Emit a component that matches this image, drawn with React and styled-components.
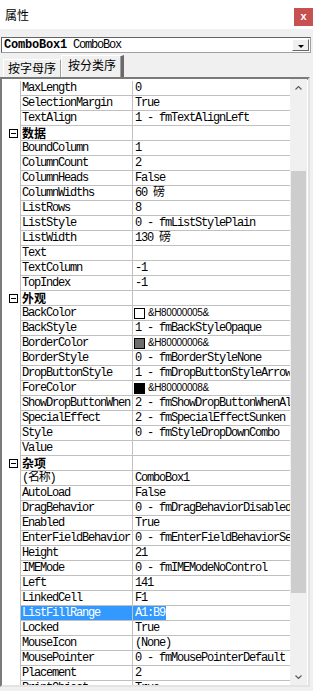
import React from 'react';
import styled, { createGlobalStyle } from 'styled-components';

const rows = [
	{ name: 'MaxLength', value: '0' },
	{ name: 'SelectionMargin', value: 'True' },
	{ name: 'TextAlign', value: '1 - fmTextAlignLeft' },
	{ cat: '数据' },
	{ name: 'BoundColumn', value: '1' },
	{ name: 'ColumnCount', value: '2' },
	{ name: 'ColumnHeads', value: 'False' },
	{ name: 'ColumnWidths', value: '60 磅' },
	{ name: 'ListRows', value: '8' },
	{ name: 'ListStyle', value: '0 - fmListStylePlain' },
	{ name: 'ListWidth', value: '130 磅' },
	{ name: 'Text', value: '' },
	{ name: 'TextColumn', value: '-1' },
	{ name: 'TopIndex', value: '-1' },
	{ cat: '外观' },
	{ name: 'BackColor', value: '&H80000005&', swatch: '#ffffff' },
	{ name: 'BackStyle', value: '1 - fmBackStyleOpaque' },
	{ name: 'BorderColor', value: '&H80000006&', swatch: '#6d6d6d' },
	{ name: 'BorderStyle', value: '0 - fmBorderStyleNone' },
	{ name: 'DropButtonStyle', value: '1 - fmDropButtonStyleArrow' },
	{ name: 'ForeColor', value: '&H80000008&', swatch: '#000000' },
	{ name: 'ShowDropButtonWhen', value: '2 - fmShowDropButtonWhenAlways' },
	{ name: 'SpecialEffect', value: '2 - fmSpecialEffectSunken' },
	{ name: 'Style', value: '0 - fmStyleDropDownCombo' },
	{ name: 'Value', value: '' },
	{ cat: '杂项' },
	{ name: '(名称)', value: 'ComboBox1' },
	{ name: 'AutoLoad', value: 'False' },
	{ name: 'DragBehavior', value: '0 - fmDragBehaviorDisabled' },
	{ name: 'Enabled', value: 'True' },
	{ name: 'EnterFieldBehavior', value: '0 - fmEnterFieldBehaviorSelectAll' },
	{ name: 'Height', value: '21' },
	{ name: 'IMEMode', value: '0 - fmIMEModeNoControl' },
	{ name: 'Left', value: '141' },
	{ name: 'LinkedCell', value: 'F1' },
	{ name: 'ListFillRange', value: 'A1:B9', selected: true },
	{ name: 'Locked', value: 'True' },
	{ name: 'MouseIcon', value: '(None)' },
	{ name: 'MousePointer', value: '0 - fmMousePointerDefault' },
	{ name: 'Placement', value: '2' },
	{ name: 'PrintObject', value: 'True' },
];

function Arrow({ down }) {
	return (
		<svg width="7" height="4" viewBox="0 0 7 4">
			<polyline
				points={down ? '0.5,0.5 3.5,3.5 6.5,0.5' : '0.5,3.5 3.5,0.5 6.5,3.5'}
				fill="none"
				stroke="#606060"
				strokeWidth="1.2"
			/>
		</svg>
	);
}

function PropertyRow({ row }) {
	if (row.cat) {
		return (
			<StyledRow>
				<StyledMargin>
					<StyledCollapse />
				</StyledMargin>
				<StyledCategory>{row.cat}</StyledCategory>
				<StyledValue />
			</StyledRow>
		);
	}

	return (
		<StyledRow>
			<StyledMargin />
			<StyledName $selected={row.selected}>{row.name}</StyledName>
			<StyledValue>
				{row.swatch && <StyledSwatch $color={row.swatch} />}
				{row.swatch ? (
					<StyledColorCode>{row.value}</StyledColorCode>
				) : (
					<StyledValueText $selected={row.selected}>{row.value}</StyledValueText>
				)}
			</StyledValue>
		</StyledRow>
	);
}

export default function App() {
	return (
		<>
			<GlobalStyle />
			<StyledWindow>
				<StyledTitleBar>
					<StyledTitle>属性</StyledTitle>
					<StyledClose>x</StyledClose>
				</StyledTitleBar>

				<StyledObjectSelect>
					<StyledObjectName>
						<b>ComboBox1</b> ComboBox
					</StyledObjectName>
					<StyledDropButton>
						<StyledTriangle />
					</StyledDropButton>
				</StyledObjectSelect>

				<StyledTabs>
					<StyledTab>按字母序</StyledTab>
					<StyledTab $active>按分类序</StyledTab>
				</StyledTabs>

				<StyledFrame>
					<StyledList>
						{rows.map((row, i) => (
							<PropertyRow key={i} row={row} />
						))}
					</StyledList>
					<StyledScrollbar>
						<StyledScrollButton>
							<Arrow />
						</StyledScrollButton>
						<StyledTrack>
							<StyledThumb />
						</StyledTrack>
						<StyledScrollButton>
							<Arrow down />
						</StyledScrollButton>
					</StyledScrollbar>
				</StyledFrame>
			</StyledWindow>
		</>
	);
}

const GlobalStyle = createGlobalStyle`
	html, body {
		margin: 0;
		padding: 0;
		background: #f0f0f0;
	}
	body {
		width: 313px;
		height: 691px;
		overflow: hidden;
	}
`;

const StyledWindow = styled.div`
	width: 313px;
	height: 691px;
	display: flex;
	flex-direction: column;
	background: #f0f0f0;
	font-family: 'Liberation Mono', 'Noto Sans CJK SC', monospace;
	color: #000;
`;

const StyledTitleBar = styled.div`
	height: 29px;
	flex: 0 0 auto;
	background: #ffffff;
	display: flex;
	justify-content: space-between;
	align-items: flex-start;
	padding-left: 5px;
`;

const StyledTitle = styled.div`
	margin-top: 7px;
	font-family: 'Noto Sans CJK SC', sans-serif;
	font-size: 12px;
	line-height: 16px;
`;

const StyledClose = styled.div`
	width: 19px;
	height: 18px;
	margin-top: 8px;
	background: #c75050;
	color: #ffffff;
	font-family: 'Liberation Sans', sans-serif;
	font-weight: bold;
	font-size: 11px;
	line-height: 17px;
	text-align: center;
`;

const StyledObjectSelect = styled.div`
	margin: 8px 2px 0 1px;
	height: 16px;
	box-sizing: border-box;
	border: 1px solid;
	border-color: #646464 #a0a0a0 #a0a0a0 #646464;
	background: #ffffff;
	display: flex;
	align-items: center;
	justify-content: space-between;
`;

const StyledObjectName = styled.div`
	padding-left: 2px;
	font-size: 12px;
	line-height: 14px;
	letter-spacing: -1.2px;
	white-space: nowrap;

	b {
		letter-spacing: -0.2px;
	}
`;

const StyledDropButton = styled.div`
	width: 17px;
	height: 12px;
	margin-right: 1px;
	box-sizing: border-box;
	background: #f0f0f0;
	border: 1px solid;
	border-color: #ffffff #696969 #696969 #ffffff;
	display: flex;
	align-items: center;
	justify-content: center;
`;

const StyledTriangle = styled.div`
	width: 0;
	height: 0;
	margin-top: 2px;
	border-left: 3px solid transparent;
	border-right: 3px solid transparent;
	border-top: 3px solid #000;
`;

const StyledTabs = styled.div`
	height: 22px;
	margin-top: 2px;
	padding-left: 3px;
	display: flex;
	align-items: flex-end;
`;

const StyledTab = styled.div`
	box-sizing: border-box;
	width: ${(p) => (p.$active ? '63px' : '58px')};
	height: ${(p) => (p.$active ? '22px' : '18px')};
	padding-left: ${(p) => (p.$active ? '6px' : '4px')};
	border-top: 1px solid #ffffff;
	border-left: 1px solid #ffffff;
	border-right: ${(p) => (p.$active ? '3px solid #696969' : '1px solid #a0a0a0')};
	box-shadow: ${(p) => (p.$active ? 'inset -1px 0 0 #a0a0a0' : 'none')};
	font-family: 'Noto Sans CJK SC', sans-serif;
	font-size: 12px;
	line-height: ${(p) => (p.$active ? '17px' : '15px')};
	white-space: nowrap;
`;

const StyledFrame = styled.div`
	width: 310px;
	height: 610px;
	box-sizing: border-box;
	border: 2px solid;
	border-color: #7a7a7a #e3e3e3 #e3e3e3 #7a7a7a;
	box-shadow: inset 1px 1px 0 #a0a0a0;
	background: #ffffff;
	display: flex;
	flex: 0 0 auto;
`;

const StyledList = styled.div`
	flex: 1;
	padding-top: 2px;
	overflow: hidden;
	background: #ffffff;
`;

const StyledRow = styled.div`
	display: grid;
	grid-template-columns: 19px 112px 1fr;
	height: 15px;
	font-size: 12px;
	line-height: 14px;
	letter-spacing: -1.2px;
	white-space: nowrap;
`;

const StyledMargin = styled.div`
	border-right: 1px solid #c0c0c0;
	display: flex;
	align-items: center;
	padding-left: 7px;
`;

const StyledCollapse = styled.div`
	position: relative;
	width: 9px;
	height: 9px;
	box-sizing: border-box;
	border: 1px solid #000;

	&::after {
		content: '';
		position: absolute;
		left: 1px;
		right: 1px;
		top: 3px;
		height: 1px;
		background: #000;
	}
`;

const StyledName = styled.div`
	padding-left: 1px;
	border-bottom: 1px solid #c0c0c0;
	border-right: 1px solid #c0c0c0;
	overflow: hidden;
	background: ${(p) => (p.$selected ? '#3399ff' : 'transparent')};
	color: ${(p) => (p.$selected ? '#ffffff' : '#000')};
`;

const StyledCategory = styled.div`
	padding-left: 1px;
	border-bottom: 1px solid #c0c0c0;
	border-right: 1px solid #c0c0c0;
	font-family: 'Noto Sans CJK SC', sans-serif;
	font-weight: bold;
	font-size: 12px;
	line-height: 14px;
	letter-spacing: 0;
`;

const StyledValue = styled.div`
	border-bottom: 1px solid #c0c0c0;
	overflow: hidden;
	display: flex;
	align-items: center;
`;

const StyledValueText = styled.span`
	padding: 0 1px 0 2px;
	line-height: 14px;
	background: ${(p) => (p.$selected ? '#3399ff' : 'transparent')};
	color: ${(p) => (p.$selected ? '#ffffff' : '#000')};
`;

const StyledSwatch = styled.span`
	flex: 0 0 auto;
	width: 11px;
	height: 11px;
	margin-left: 1px;
	box-sizing: border-box;
	border: 1px solid #000;
	background: ${(p) => p.$color};
`;

const StyledColorCode = styled.span`
	margin-left: 3px;
	font-family: 'Liberation Sans', sans-serif;
	font-size: 10px;
	letter-spacing: -0.4px;
`;

const StyledScrollbar = styled.div`
	width: 17px;
	margin-right: 1px;
	display: flex;
	flex-direction: column;
	background: #f0f0f0;
`;

const StyledScrollButton = styled.div`
	height: 17px;
	flex: 0 0 auto;
	display: flex;
	align-items: center;
	justify-content: center;
`;

const StyledTrack = styled.div`
	flex: 1;
	padding-top: 75px;
`;

const StyledThumb = styled.div`
	height: 422px;
	margin: 0 1px;
	background: #cdcdcd;
`;
